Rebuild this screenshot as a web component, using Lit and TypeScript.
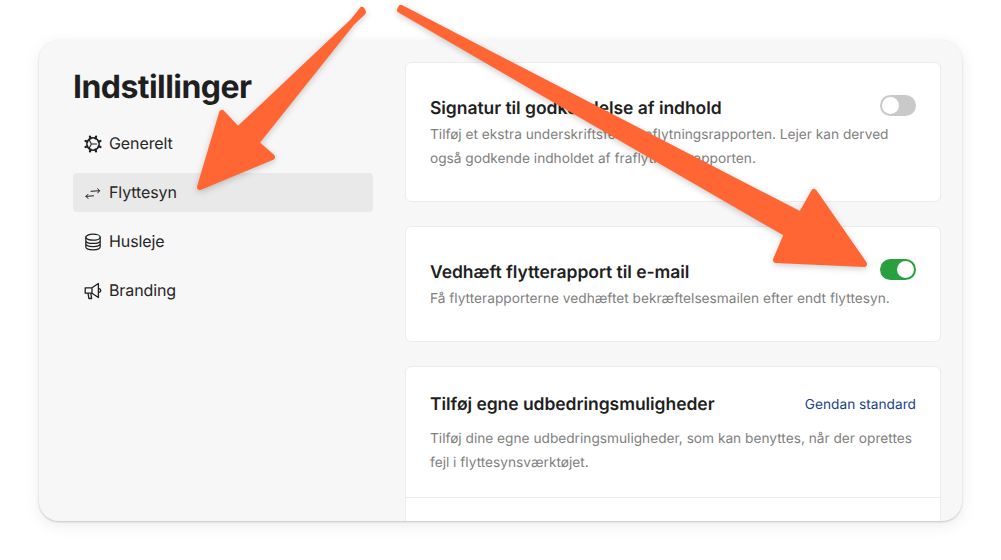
import { LitElement, html, css, svg } from "lit";
import { customElement } from "lit/decorators.js";

const teeth = [0, 45, 90, 135, 180, 225, 270, 315].map(
  (a) => svg`<path d="M9 .9v2" transform="rotate(${a + 22.5} 9 9)" stroke-width="2.200" />`
);
const gear = svg`${teeth}<circle cx="9" cy="9" r="6.200" stroke-width="1.500"/><path d="M7.400 9h5.200M7.400 9L5.400 5.200M7.400 9l-2 3.800" stroke-width="1.100"/>`;
const swap = svg`<path d="M7 7.300l8.500-.6M13.600 4.700l2 2-1.800 2.200M9.500 11.800l-7.500.6M4 10.300l-2 2.100 2 2.100" stroke-width="1"/>`;
const db = svg`<ellipse cx="9" cy="4.200" rx="7.200" ry="3" stroke-width="1.200"/><path d="M1.800 4.200v9.600c0 1.700 3.200 3 7.200 3s7.200-1.300 7.200-3V4.200M1.800 7.400c0 1.700 3.200 3 7.200 3s7.200-1.300 7.200-3M1.800 10.600c0 1.700 3.200 3 7.200 3s7.200-1.300 7.200-3" stroke-width="1.200"/>`;
const horn = svg`<path d="M1.200 5.800h6.800l6.400-4.300v14l-6.400-4.300H1.200zM8 5.800v5.400M14.400 6.400c1.600.4 2.400 1.300 2.400 2.100s-.8 1.800-2.400 2.100M4 11.200l.9 5.300h2.700l-.8-5.300" stroke-width="1.300"/>`;

const nav = [
  { label: "Generelt", icon: gear, active: false },
  { label: "Flyttesyn", icon: swap, active: true },
  { label: "Husleje", icon: db, active: false },
  { label: "Branding", icon: horn, active: false },
];

@customElement("app-root")
export class AppRoot extends LitElement {
  static styles = css`
    :host {
      display: block;
      position: relative;
      width: 1001px;
      height: 560px;
      overflow: hidden;
      background: #fff;
      font-family: Inter, "Liberation Sans", sans-serif;
      color: #1f1f1f;
      text-rendering: geometricPrecision;
    }
    .stage {
      height: 560px;
      box-sizing: border-box;
      padding: 40px 39px 39px;
    }
    .panel {
      height: 481px;
      box-sizing: border-box;
      display: flex;
      gap: 32px;
      padding: 22px 21px 0 34px;
      overflow: hidden;
      background: #f7f7f7;
      border-radius: 20px;
      box-shadow: 0 1px 2px rgba(0, 0, 0, 0.18), 0 4px 16px rgba(0, 0, 0, 0.08);
    }
    .side {
      flex: 0 0 300px;
    }
    h1 {
      margin: 1px 0 13px;
      font-size: 32px;
      line-height: 48px;
      font-weight: 700;
      letter-spacing: -0.55px;
    }
    .nav {
      display: flex;
      flex-direction: column;
      gap: 10px;
    }
    .item {
      display: flex;
      align-items: center;
      gap: 7px;
      height: 39px;
      padding: 0 11px;
      border-radius: 4px;
      font-size: 16px;
      letter-spacing: -0.1px;
      color: #262626;
    }
    .item span {
      margin-bottom: 2px;
    }
    .item.active {
      background: #e9e9e9;
    }
    .item svg {
      flex: none;
      width: 18px;
      height: 18px;
      fill: none;
      stroke: #1f1f1f;
      stroke-linejoin: round;
      stroke-linecap: round;
    }
    .main {
      flex: 0 0 536px;
      display: flex;
      flex-direction: column;
      gap: 24px;
    }
    .card {
      flex: none;
      box-sizing: border-box;
      background: #fff;
      border: 1px solid #ebebeb;
      border-radius: 6px;
      padding: 24px;
    }
    .c1 { height: 140px; }
    .c2 { height: 116px; }
    .c3 { height: 300px; padding: 0; }
    .row {
      display: flex;
      align-items: center;
      justify-content: space-between;
      height: 40px;
      margin-top: -1px;
    }
    .title {
      margin-top: 6px;
      font-size: 17.5px;
      letter-spacing: -0.05px;
      line-height: 40px;
      font-weight: 600;
      color: #1f1f1f;
    }
    .desc {
      font-size: 13.7px;
      line-height: 24px;
      color: #808080;
      margin: 0;
    }
    .desc.tight { margin-top: -3px; }
    .toggle {
      box-sizing: border-box;
      width: 36px;
      height: 21px;
      margin-top: -2px;
      padding: 2px;
      border-radius: 11px;
      background: #c9c9c9;
      display: flex;
    }
    .toggle.on {
      background: #28a03f;
      justify-content: flex-end;
    }
    .knob {
      width: 17px;
      height: 17px;
      border-radius: 50%;
      background: #fff;
    }
    .head {
      padding: 16px 24px 0;
    }
    .head .desc {
      margin-top: 5px;
    }
    .link {
      margin-top: 6px;
      font-size: 13.7px;
      color: #1c3f8c;
    }
    .sep {
      height: 1px;
      background: #ebebeb;
      margin-top: 22px;
    }
    .arrows {
      position: absolute;
      inset: 0;
      width: 1001px;
      height: 560px;
      pointer-events: none;
      filter: drop-shadow(0 2px 3px rgba(0, 0, 0, 0.2));
    }
    .arrows polygon {
      fill: #ff6633;
      stroke: #ff6633;
      stroke-width: 6;
      stroke-linejoin: round;
    }
  `;

  render() {
    return html`
      <div class="stage">
        <div class="panel">
          <aside class="side">
            <h1>Indstillinger</h1>
            <nav class="nav">
              ${nav.map(
                (n) => html`<div class="item ${n.active ? "active" : ""}">
                  <svg viewBox="0 0 18 18">${n.icon}</svg><span>${n.label}</span>
                </div>`
              )}
            </nav>
          </aside>
          <main class="main">
            <section class="card c1">
              <div class="row">
                <span class="title">Signatur til godkendelse af indhold</span>
                <span class="toggle"><span class="knob"></span></span>
              </div>
              <p class="desc tight">
                Tilføj et ekstra underskriftsfelt i fraflytningsrapporten. Lejer kan derved<br />
                også godkende indholdet af fraflytningsrapporten.
              </p>
            </section>
            <section class="card c2">
              <div class="row">
                <span class="title">Vedhæft flytterapport til e-mail</span>
                <span class="toggle on"><span class="knob"></span></span>
              </div>
              <p class="desc tight">Få flytterapporterne vedhæftet bekræftelsesmailen efter endt flyttesyn.</p>
            </section>
            <section class="card c3">
              <div class="head">
                <div class="row">
                  <span class="title">Tilføj egne udbedringsmuligheder</span>
                  <span class="link">Gendan standard</span>
                </div>
                <p class="desc">
                  Tilføj dine egne udbedringsmuligheder, som kan benyttes, når der oprettes<br />
                  fejl i flyttesynsværktøjet.
                </p>
              </div>
              <div class="sep"></div>
            </section>
          </main>
        </div>
      </div>
      <svg class="arrows" viewBox="0 0 1001 560">
        <polygon points="363,12 238,130 222,113 200,187 272,157 256,143 362,10" />
        <polygon points="401,8 801,215 814,192 864,264 776,260 787,234 400,10" />
      </svg>
    `;
  }
}
